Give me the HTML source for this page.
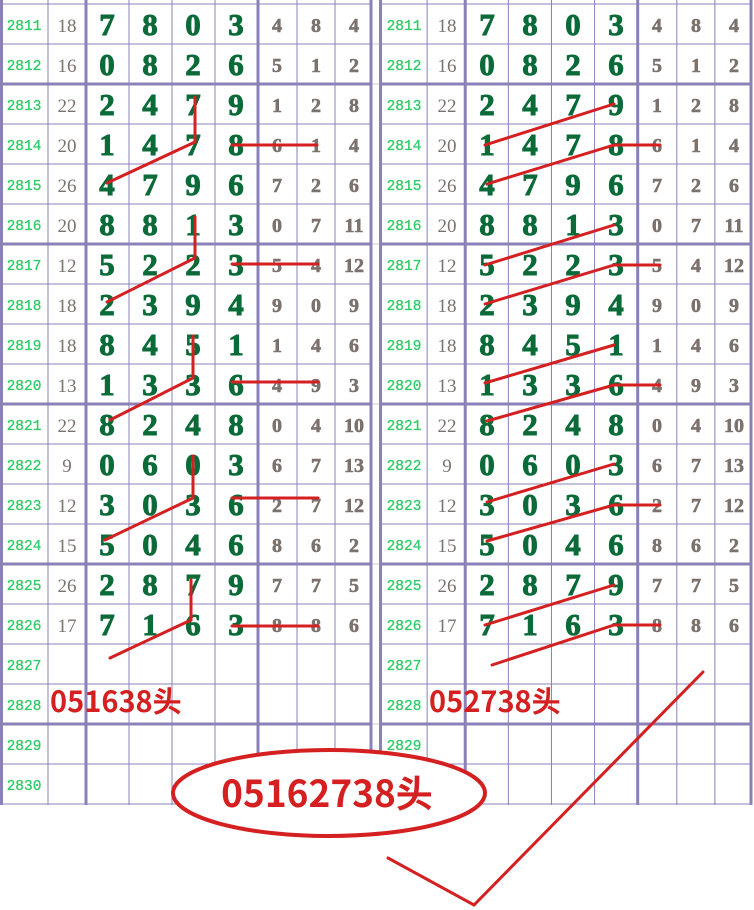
<!DOCTYPE html>
<html><head><meta charset="utf-8"><style>
html,body{margin:0;padding:0;background:#fff;}
svg{display:block}
.n{font-family:"Liberation Mono",monospace;font-size:14.5px;fill:#2ecc66;stroke:#2ecc66;stroke-width:0.3px}
.s{font-family:"Liberation Serif",serif;font-size:19px;fill:#7b726e}
.d{font-family:"Liberation Serif",serif;font-size:31px;font-weight:bold;fill:#0a6a38;stroke:#0a6a38;stroke-width:0.9px}
.g{font-family:"Liberation Serif",serif;font-size:20px;font-weight:bold;fill:#7b726e;stroke:#7b726e;stroke-width:0.6px}
.r{font-family:"Noto Sans CJK SC","Liberation Sans",sans-serif;font-weight:bold;fill:#d42020}
</style></head><body>
<svg width="754" height="910" viewBox="0 0 754 910" xmlns="http://www.w3.org/2000/svg">
<defs>
<g id="grid" stroke="#8b80b8" fill="none">
<g stroke-width="1">
<path d="M0 4H372M0 44H372M0 124H372M0 164H372M0 204H372M0 284H372M0 324H372M0 364H372M0 444H372M0 484H372M0 524H372M0 604H372M0 644H372M0 684H372M0 764H372M0 804H372"/>
<path d="M48 0V805M129 0V805M172 0V805M215 0V805M297 0V805M335 0V805"/>
</g>
<g stroke-width="3">
<path d="M0 84H372M0 244H372M0 404H372M0 564H372M0 724H372"/>
<path d="M1.5 0V805M86 0V805M258 0V805M371 0V805"/>
</g>
</g>
<g id="nums">
<g class="n" text-anchor="middle">
<text x="24" y="30">2811</text><text x="24" y="70">2812</text><text x="24" y="110">2813</text><text x="24" y="150">2814</text><text x="24" y="190">2815</text><text x="24" y="230">2816</text><text x="24" y="270">2817</text><text x="24" y="310">2818</text><text x="24" y="350">2819</text><text x="24" y="390">2820</text><text x="24" y="430">2821</text><text x="24" y="470">2822</text><text x="24" y="510">2823</text><text x="24" y="550">2824</text><text x="24" y="590">2825</text><text x="24" y="630">2826</text><text x="24" y="670">2827</text><text x="24" y="710">2828</text><text x="24" y="750">2829</text><text x="24" y="790">2830</text>
</g>
<g class="s" text-anchor="middle">
<text x="67" y="32">18</text><text x="67" y="72">16</text><text x="67" y="112">22</text><text x="67" y="152">20</text><text x="67" y="192">26</text><text x="67" y="232">20</text><text x="67" y="272">12</text><text x="67" y="312">18</text><text x="67" y="352">18</text><text x="67" y="392">13</text><text x="67" y="432">22</text><text x="67" y="472">9</text><text x="67" y="512">12</text><text x="67" y="552">15</text><text x="67" y="592">26</text><text x="67" y="632">17</text>
</g>
<g class="d" text-anchor="middle">
<text y="35"><tspan x="107">7</tspan><tspan x="150">8</tspan><tspan x="193">0</tspan><tspan x="236">3</tspan></text>
<text y="75"><tspan x="107">0</tspan><tspan x="150">8</tspan><tspan x="193">2</tspan><tspan x="236">6</tspan></text>
<text y="115"><tspan x="107">2</tspan><tspan x="150">4</tspan><tspan x="193">7</tspan><tspan x="236">9</tspan></text>
<text y="155"><tspan x="107">1</tspan><tspan x="150">4</tspan><tspan x="193">7</tspan><tspan x="236">8</tspan></text>
<text y="195"><tspan x="107">4</tspan><tspan x="150">7</tspan><tspan x="193">9</tspan><tspan x="236">6</tspan></text>
<text y="235"><tspan x="107">8</tspan><tspan x="150">8</tspan><tspan x="193">1</tspan><tspan x="236">3</tspan></text>
<text y="275"><tspan x="107">5</tspan><tspan x="150">2</tspan><tspan x="193">2</tspan><tspan x="236">3</tspan></text>
<text y="315"><tspan x="107">2</tspan><tspan x="150">3</tspan><tspan x="193">9</tspan><tspan x="236">4</tspan></text>
<text y="355"><tspan x="107">8</tspan><tspan x="150">4</tspan><tspan x="193">5</tspan><tspan x="236">1</tspan></text>
<text y="395"><tspan x="107">1</tspan><tspan x="150">3</tspan><tspan x="193">3</tspan><tspan x="236">6</tspan></text>
<text y="435"><tspan x="107">8</tspan><tspan x="150">2</tspan><tspan x="193">4</tspan><tspan x="236">8</tspan></text>
<text y="475"><tspan x="107">0</tspan><tspan x="150">6</tspan><tspan x="193">0</tspan><tspan x="236">3</tspan></text>
<text y="515"><tspan x="107">3</tspan><tspan x="150">0</tspan><tspan x="193">3</tspan><tspan x="236">6</tspan></text>
<text y="555"><tspan x="107">5</tspan><tspan x="150">0</tspan><tspan x="193">4</tspan><tspan x="236">6</tspan></text>
<text y="595"><tspan x="107">2</tspan><tspan x="150">8</tspan><tspan x="193">7</tspan><tspan x="236">9</tspan></text>
<text y="635"><tspan x="107">7</tspan><tspan x="150">1</tspan><tspan x="193">6</tspan><tspan x="236">3</tspan></text>
</g>
<g class="g" text-anchor="middle">
<text y="32"><tspan x="277">4</tspan><tspan x="316">8</tspan><tspan x="354">4</tspan></text>
<text y="72"><tspan x="277">5</tspan><tspan x="316">1</tspan><tspan x="354">2</tspan></text>
<text y="112"><tspan x="277">1</tspan><tspan x="316">2</tspan><tspan x="354">8</tspan></text>
<text y="152"><tspan x="277">6</tspan><tspan x="316">1</tspan><tspan x="354">4</tspan></text>
<text y="192"><tspan x="277">7</tspan><tspan x="316">2</tspan><tspan x="354">6</tspan></text>
<text y="232"><tspan x="277">0</tspan><tspan x="316">7</tspan><tspan x="354">11</tspan></text>
<text y="272"><tspan x="277">5</tspan><tspan x="316">4</tspan><tspan x="354">12</tspan></text>
<text y="312"><tspan x="277">9</tspan><tspan x="316">0</tspan><tspan x="354">9</tspan></text>
<text y="352"><tspan x="277">1</tspan><tspan x="316">4</tspan><tspan x="354">6</tspan></text>
<text y="392"><tspan x="277">4</tspan><tspan x="316">9</tspan><tspan x="354">3</tspan></text>
<text y="432"><tspan x="277">0</tspan><tspan x="316">4</tspan><tspan x="354">10</tspan></text>
<text y="472"><tspan x="277">6</tspan><tspan x="316">7</tspan><tspan x="354">13</tspan></text>
<text y="512"><tspan x="277">2</tspan><tspan x="316">7</tspan><tspan x="354">12</tspan></text>
<text y="552"><tspan x="277">8</tspan><tspan x="316">6</tspan><tspan x="354">2</tspan></text>
<text y="592"><tspan x="277">7</tspan><tspan x="316">7</tspan><tspan x="354">5</tspan></text>
<text y="632"><tspan x="277">8</tspan><tspan x="316">8</tspan><tspan x="354">6</tspan></text>
</g>
</g>
</defs>
<path d="M372 44H379M372 84H379M372 244H379M372 404H379M372 564H379M372 724H379" stroke="#ccc" stroke-width="1"/>
<use href="#grid"/>
<use href="#grid" transform="translate(379,0) scale(1.0027,1)"/>
<use href="#nums"/>
<use href="#nums" transform="translate(380,0)"/>
<g stroke="#d42020" stroke-width="3" fill="none" stroke-linecap="round">
<path d="M195 97V142L107 183M232 145H317"/>
<path d="M195 217V258L107 302M232 264H318"/>
<path d="M193 336V378L110 420M232 382H318"/>
<path d="M193 456V498L105 540M232 498H318"/>
<path d="M191 580V620L110 658M232 626H318"/>
<path d="M614 104L485 145M614 145L487 184M614 145H660"/>
<path d="M614 225L485 265M614 265L485 304M614 265H660"/>
<path d="M614 345L485 383M614 385L487 421M614 385H660"/>
<path d="M614 464L487 502M614 505L487 541M614 505H660"/>
<path d="M614 585L485 625M614 625L492 665M614 625H660"/>
<path d="M388 858L474 905L703 672"/>
</g>
<text class="r" x="50" y="712" font-size="29">051638头</text>
<text class="r" x="429" y="712" font-size="29">052738头</text>
<ellipse cx="329" cy="793" rx="156" ry="43" fill="#fff" stroke="#d42020" stroke-width="4"/>
<text class="r" x="327" y="807" font-size="37" text-anchor="middle">05162738头</text>
</svg>
</body></html>
